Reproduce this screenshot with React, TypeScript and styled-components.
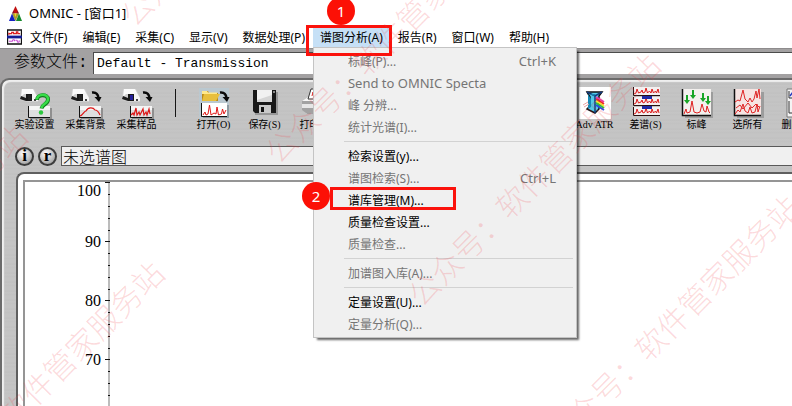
import React from "react";
import styled, { createGlobalStyle } from "styled-components";

const uiFont = '"Noto Sans", "Noto Sans CJK SC", sans-serif';
const monoFont = '"Liberation Mono", "Noto Sans CJK SC", monospace';

const GlobalStyle = createGlobalStyle`
  *, *::before, *::after { box-sizing: border-box; }
  body { margin: 0; background: #fff; font-family: ${uiFont}; font-size: 12px; color: #000; }
  button, input { font: inherit; color: inherit; margin: 0; }
`;

const Window = styled.div`
  position: relative;
  display: flex;
  flex-direction: column;
  height: 100vh;
  overflow: hidden;
  background: #a3a1a2;
`;

const TitleBar = styled.header`
  display: flex;
  align-items: center;
  gap: 6px;
  height: 26px;
  padding: 0 8px;
  background: #fff;
`;

const Title = styled.h1`
  margin: 0;
  font-size: 13px;
  font-weight: 400;
  line-height: 20px;
`;

const MenuBar = styled.nav`
  display: flex;
  align-items: center;
  gap: 1px;
  height: 22px;
  padding-left: 7px;
  background: #fff;
`;

const MenuEntry = styled.div`
  position: relative;
  height: 22px;
`;

const MenuButton = styled.button<{ $open?: boolean }>`
  display: block;
  height: 22px;
  padding: 2px 7px 0;
  border: 0;
  background: ${(p) => (p.$open ? "#c6e0f6" : "transparent")};
  line-height: 20px;
  white-space: nowrap;
`;

const Dropdown = styled.div`
  position: absolute;
  z-index: 2;
  top: 21px;
  left: 0;
  width: 264px;
  padding: 2px;
  border: 1px solid #c4c4c4;
  background: #f0f0f0;
  box-shadow: 3px 3px 2px -1px rgba(0, 0, 0, 0.6);
`;

const Item = styled.button`
  display: flex;
  align-items: center;
  justify-content: space-between;
  width: 100%;
  height: 22px;
  padding: 0 18px 0 32px;
  border: 0;
  background: transparent;
  white-space: nowrap;
  &:disabled { color: #757575; }
`;

const Wide = styled.span`
  font-size: 13px;
`;

const Separator = styled.hr`
  height: 1px;
  margin: 3px 1px 3px 28px;
  border: 0;
  background: #d2d2d2;
`;

const MenuMark = styled.div`
  position: absolute;
  z-index: 3;
  top: -1px;
  left: -7px;
  width: 86px;
  height: 31px;
  border: 3px solid #fb120c;
  pointer-events: none;
`;

const ItemMark = styled.div`
  position: absolute;
  z-index: 3;
  top: 139px;
  left: 16px;
  width: 126px;
  height: 23px;
  border: 3px solid #fb120c;
  pointer-events: none;
`;

const Badge = styled.span<{ $x: number; $y: number }>`
  position: absolute;
  z-index: 4;
  top: ${(p) => p.$y}px;
  left: ${(p) => p.$x}px;
  display: grid;
  place-items: center;
  width: 28px;
  height: 28px;
  border-radius: 50%;
  background: #fc1006;
  color: #fff;
  font-size: 15px;
`;

const ParamRow = styled.label`
  display: flex;
  align-items: center;
  gap: 4px;
  height: 30px;
  padding: 3px 0 4px 14px;
  border-top: 1px solid #8e8c8d;
  font-size: 16px;
`;

const ParamLabel = styled.span`
  display: flex;
  width: 75px;
  font-family: ${monoFont};
  font-weight: 300;
  line-height: 20px;
`;

const ParamInput = styled.input`
  flex: 1;
  min-width: 0;
  height: 22px;
  padding: 0 3px;
  border: 0;
  border-top: 1px solid #4c4c4c;
  border-left: 1px solid #4c4c4c;
  background: #fff;
  font-family: ${monoFont};
  font-size: 13px;
`;

const Panel = styled.main`
  flex: 1;
  min-height: 0;
  display: flex;
  flex-direction: column;
  overflow: hidden;
  border: 2px solid #6b6b6b;
  border-right: 0;
  border-bottom: 0;
  border-top-left-radius: 9px;
  box-shadow: inset 2px 2px 1px #efefef;
  background: repeating-linear-gradient(
    #c4c4c4 0, #c4c4c4 3px, #c0c0c0 4px, #c6c6c6 6px, #c1c1c1 7px, #c4c4c4 9px
  );
`;

const Toolbar = styled.div`
  display: flex;
  height: 66px;
  padding: 8px 0 0 7px;
`;

const Tool = styled.button`
  flex: 0 0 51px;
  display: flex;
  flex-direction: column;
  align-items: center;
  padding: 0;
  border: 0;
  background: transparent;
  font-family: "Liberation Serif", "Noto Sans CJK SC", serif;
  font-size: 10px;
  line-height: 12px;
  white-space: nowrap;
  svg { display: block; overflow: visible; }
`;

const Divider = styled.span`
  flex: 0 0 1px;
  height: 28px;
  margin: 1px 12px 0 13px;
  background: #161616;
`;

const Spacer = styled.span`
  flex: 0 0 228px;
`;

const StatusRow = styled.div`
  display: flex;
  align-items: center;
  gap: 4px;
  height: 20px;
  padding-left: 13px;
`;

const Round = styled.button`
  display: grid;
  place-items: center;
  flex: 0 0 19px;
  height: 19px;
  padding: 0;
  border: 2px solid #3c3c3c;
  border-radius: 50%;
  background: radial-gradient(circle at 40% 30%, #fff, #8c8c8c);
  font: bold 17px/14px "Liberation Serif", serif;
`;

const StatusInput = styled.input`
  flex: 1;
  min-width: 0;
  height: 20px;
  padding: 0 1px;
  border: 1px solid #595959;
  border-right: 0;
  background: #f0f0f0;
  font-family: ${monoFont};
  font-size: 16px;
  font-weight: 300;
`;

const Plot = styled.section`
  flex: 1;
  min-height: 0;
  margin: 6px 0 0 14px;
  padding: 6px 0 0 5px;
  border: 2px solid #5f5f5f;
  border-right: 0;
  border-bottom: 0;
  border-top-left-radius: 8px;
  background: #fff;
  overflow: hidden;
`;

const PlotInner = styled.div`
  height: 100%;
  border-top: 2px solid #959595;
  border-left: 2px solid #959595;
  overflow: hidden;
`;

const AxisLabel = styled.text`
  font-family: "Liberation Serif", serif;
  font-size: 16px;
  text-anchor: end;
`;

const Watermarks = styled.div`
  position: absolute;
  inset: 0;
  z-index: 5;
  overflow: hidden;
  pointer-events: none;
`;

const Watermark = styled.span<{ $x: number; $y: number }>`
  position: absolute;
  left: ${(p) => p.$x - 180}px;
  top: ${(p) => p.$y - 20}px;
  width: 360px;
  line-height: 40px;
  text-align: center;
  white-space: nowrap;
  font-family: "Noto Sans CJK SC", sans-serif;
  font-size: 31px;
  font-weight: 300;
  color: rgba(240, 60, 70, 0.19);
  transform: rotate(-45deg);
`;

const AppLogo = () => (
  <svg width="15" height="15" viewBox="0 0 15 15" aria-hidden="true">
    <path d="M7.5 0 11 7.5H4z" fill="#c01010" />
    <path d="M4 7.5H11L7.5 15z" fill="#f6e21c" />
    <path d="M4 7.5 7.3 15H1z" fill="#1521c4" />
    <path d="M11 7.5 14 15H8z" fill="#158a2c" />
    <path d="M4 7.500 5.500 4.500 7.500 11 9.500 4.500 11 7.500 7.500 15z" fill="#1b1b5a" opacity=".35" />
  </svg>
);

const DocIcon = () => (
  <svg width="15" height="16" viewBox="0 0 16 16" aria-hidden="true">
    <path d="M.5 .5h15v15H.5z" fill="#fff" stroke="#111" strokeWidth="1.500" />
    <path d="M0 6.500h16v3H0z" fill="#141c94" />
    <path d="M2 5.500V3.500M2 4.500h3V3h2v1.500h3V2.500h1.500v2H14" fill="none" stroke="#dd2020" strokeWidth="1.300" />
    <path d="M2 12.500h4V11h2v1.500M9 11.500h2v2h2v-2" fill="none" stroke="#c33bd0" />
  </svg>
);

const Spectrometer = ({ core = "#222" }: { core?: string }) => (
  <g>
    <path d="M3 1h13l4 8v5H9l-7-2z" fill="#cfcfcf" />
    <path d="M4 1h11l2 4-3 1H6L3 9z" fill="#fbfbfb" />
    <path d="M3 8l5 2v3l-6-2z" fill="#1c1c1c" />
    <path d="M8 6h6v7H8z" fill="#191919" />
    <path d="M10 7h3v5h-3z" fill={core} />
    <path d="M14 5h3l3 5v3h-6z" fill="#f5f5f5" />
    <path d="M16 11h2v2h-2z" fill="#444" />
  </g>
);

const Arrow = () => (
  <g fill="none" stroke="#0a0a0a">
    <path d="M23 4.500C27 4 29 6 29.500 10" strokeWidth="2.500" />
    <path d="M25.500 9h7L30 14z" fill="#0a0a0a" stroke="none" />
  </g>
);

const MiniPlot = ({ d }: { d?: string }) => (
  <g>
    <path d="M12 20h22v11H12z" fill="#8f8f8f" />
    <path d="M10 18h22v11H10z" fill="#dedede" />
    <path d="M10 18h22v4H10z" fill="#f5f5f5" />
    <path d="M10.500 18v11.500H32" fill="none" stroke="#111" />
    {d && <path d={d} fill="none" stroke="#dd1616" strokeWidth="1.200" />}
  </g>
);

const Svg = ({ children }: { children: React.ReactNode }) => (
  <svg width="34" height="31" viewBox="0 0 34 31" aria-hidden="true">{children}</svg>
);

const SetupIcon = () => (
  <Svg>
    <Spectrometer />
    <MiniPlot />
    <path d="M19 12c0-6 11-6.500 11-.5 0 5-6 4.500-6.500 9" fill="none" stroke="#0e7d1c" strokeWidth="4" />
    <path d="M19 11.500c0-6 11-6.500 11-.5 0 5-6 4.500-6.500 9" fill="none" stroke="#37dc49" strokeWidth="2.500" />
    <circle cx="23" cy="24.500" r="2.200" fill="#2bc63d" />
  </Svg>
);

const BackgroundIcon = () => (
  <Svg>
    <Spectrometer />
    <Arrow />
    <MiniPlot d="M11 28c3-1 4-5 6-5 2-4 7-4 9-1 3 0 4 3 5 5" />
  </Svg>
);

const SampleIcon = () => (
  <Svg>
    <Spectrometer core="#25209a" />
    <Arrow />
    <MiniPlot d="M11 27l2-2 1 2 2-7 1 7 2-3 1 3 3-6 1 6 2-3 1 3 2-6 1 5" />
  </Svg>
);

const OpenIcon = () => (
  <Svg>
    <path d="M2 0h30v30H2z" fill="#b4cbd9" opacity=".6" />
    <path d="M5 3h6l1 2h9v8H5z" fill="#b98a1a" />
    <path d="M5 3h5l1 1.500h9V6H5z" fill="#ffe98c" />
    <path d="M7 6h16l-4 7H5z" fill="#e8bf3d" />
    <Arrow />
    <path d="M6 17h26v13H6z" fill="#8d9aa2" />
    <path d="M4 15h26v13H4z" fill="#fff" />
    <path d="M4.500 15v13.500H30" fill="none" stroke="#111" />
    <path d="M6 27l2-3 1 3 2-1 1.500-9L14 27l3-2 2 1 1-7 1.500 8 3-1 1-5 1.500 5 2-4" fill="none" stroke="#e01818" />
  </Svg>
);

const SaveIcon = () => (
  <Svg>
    <path d="M7 4h23v23H7z" fill="#858585" opacity=".7" />
    <path d="M5 2h23v23H7l-2-2z" fill="#181818" />
    <path d="M9 2h15v12H9z" fill="#d5d5d5" />
    <path d="M9 2h15v5L9 12z" fill="#f1f1f1" />
    <path d="M11 17h12v8H11z" fill="#c9c9c9" />
    <path d="M13 19h3v5h-3z" fill="#111" />
    <path d="M25 3h2v2h-2z" fill="#888" />
  </Svg>
);

const PrintIcon = () => (
  <Svg>
    <path d="M5 15h27v11H8z" fill="#8a8a8a" opacity=".6" />
    <path d="M3 13l6-4h17l4 4v9l-3 3H7l-4-3z" fill="#a2a2a2" />
    <path d="M3 13l6-4h17l4 4z" fill="#f6f6f6" />
    <path d="M12 1h14l-3 10H9z" fill="#fff" stroke="#333" />
    <path d="M13 8l1-4 1 3" fill="none" stroke="#d22" />
    <path d="M3 16h27v4H3z" fill="#e6e6e6" />
  </Svg>
);

const AtrIcon = () => (
  <Svg>
    <path d="M1 -1h32v32H1z" fill="#fff" />
    <path d="M9 4h15l-3 4v13l-4 4-8-4 3-3V9z" fill="#54c9e8" stroke="#111" strokeWidth="1.500" />
    <path d="M9 4l8 4 7-4M17 8v17" fill="none" stroke="#123a7d" strokeWidth="1.500" />
    <path d="M10 6l3 5v8l-3 2zM12 6h6l-2 2z" fill="#1689b5" />
    <g fill="none" strokeWidth="2">
      <path d="M18 9l8 5" stroke="#e83bb0" />
      <path d="M18 11l8 5" stroke="#ef2525" />
      <path d="M18 13l8 5" stroke="#f6e52b" />
      <path d="M18 15l8 5" stroke="#2fc13c" />
      <path d="M18 17l8 5" stroke="#2b51e0" />
    </g>
    <path d="M5 17l5-3M6 19l5-3" stroke="#e9a3a3" />
  </Svg>
);

const SubtractIcon = () => (
  <Svg>
    {[-1, 9, 19].map((y) => (
      <g key={y} transform={`translate(4 ${y})`}>
        <path d="M0 0h27v9H0z" fill="#f4f0f0" />
        <path d="M.5 0v8.500H27" fill="none" stroke="#2a1010" />
        <path d="M1 7l2-1 1-4 1.500 4L8 5l1-2 1 3 2-1 1-4 1.500 5 2-2 1.500 2L19 2l1.500 4 2-2 1 2L25 2l1 4" fill="none" stroke="#dd1a1a" />
      </g>
    ))}
    <path d="M13 8h10v3H13zM13 18h10v3H13z" fill="#1e2aa5" />
  </Svg>
);

const PeaksIcon = () => (
  <Svg>
    <path d="M5 4h28v26H5z" fill="#8c8c8c" opacity=".7" />
    <path d="M2 1h29v26H2z" fill="#f3f0ee" />
    <path d="M2.500 1v26.500H31" fill="none" stroke="#111" strokeWidth="1.500" />
    <path d="M4 26l2-5 1 4 3-1 2-11 2 11 3 1 3-1 2-8 2 7 2 1 1-6 2 6 1 1" fill="none" stroke="#df2020" />
    <path
      d="M6 7h2v5h2l-3 4-3-4h2zM12 2h2v5h2l-3 4-3-4h2zM22 5h2v5h2l-3 4-3-4h2zM27 8h2v5h2l-3 4-3-4h2z"
      fill="#18a526"
    />
  </Svg>
);

const SelectAllIcon = () => (
  <Svg>
    <path d="M6 4h27v26H6z" fill="#8c8c8c" opacity=".7" />
    <path d="M3 1h27v26H3z" fill="#f6e4e2" />
    <path d="M3.500 1v26.500H30" fill="none" stroke="#111" strokeWidth="1.500" />
    <g fill="none" stroke="#df2626">
      <path d="M4 14l3-2 2 1 3-11 2 9 3 3 2-4 2 4 2-3 2-8 1 7 2-9 1 10" />
      <path d="M4 26l3-4 2 2 3-8 2 7 3 2 2-6 2 6 3-1 2-8 1 8 2-6" />
      <path d="M5 20l4-3 3 4 5-6 4 5 4-4 4 4" />
    </g>
  </Svg>
);

const DeleteIcon = () => (
  <Svg>
    <path d="M5 1h24v28H5z" fill="#f4f4f4" stroke="#777" />
    <path d="M7 3v7h18M7 13v12h18" fill="none" stroke="#333" />
    <path d="M8 8l3-4 2 4 4-3" fill="none" stroke="#2738c0" strokeWidth="1.500" />
    <path d="M10 5l8 4" stroke="#d22" />
  </Svg>
);

const labels = [100, 90, 80, 70];
const ticks = Array.from({ length: 24 }, (_, i) => i);

const Axis = () => (
  <svg width="100" height="300" viewBox="0 0 100 300" role="img" aria-label="%T">
    <path d="M84 0v300" stroke="#bcbcbc" strokeWidth="2" />
    {ticks.map((i) => {
      const major = i % 5 === 0;
      const y = Math.floor(i / 5) * 59 + (i % 5) * 12;
      return <rect key={i} x={major ? 80 : 83} y={y} width={major ? 5 : 2} height="1" fill="#111" />;
    })}
    {labels.map((n, i) => (
      <AxisLabel key={n} x="76" y={i === 0 ? 14 : i * 59 + 6}>{n}</AxisLabel>
    ))}
  </svg>
);

type Entry = { text: string; keys?: string; on?: boolean; wide?: boolean };

const groups: Entry[][] = [
  [
    { text: "标峰(P)...", keys: "Ctrl+K" },
    { text: "Send to OMNIC Specta", wide: true },
    { text: "峰 分辨..." },
    { text: "统计光谱(I)..." },
  ],
  [
    { text: "检索设置(y)...", on: true },
    { text: "谱图检索(S)...", keys: "Ctrl+L" },
    { text: "谱库管理(M)...", on: true },
    { text: "质量检查设置...", on: true },
    { text: "质量检查..." },
  ],
  [{ text: "加谱图入库(A)..." }],
  [{ text: "定量设置(U)...", on: true }, { text: "定量分析(Q)..." }],
];

const menus = ["文件(F)", "编辑(E)", "采集(C)", "显示(V)", "数据处理(P)", "谱图分析(A)", "报告(R)", "窗口(W)", "帮助(H)"];

const marks = [
  [390, 36],
  [533, 179],
  [672, 321],
  [37, 387],
  [246, -101],
  [-100, 250],
];

const AnalysisMenu = () => (
  <Dropdown role="menu">
    {groups.map((group, g) => (
      <React.Fragment key={g}>
        {g > 0 && <Separator />}
        {group.map((e) => (
          <Item key={e.text} role="menuitem" disabled={!e.on}>
            {e.wide ? <Wide>{e.text}</Wide> : <span>{e.text}</span>}
            {e.keys && <Wide>{e.keys}</Wide>}
          </Item>
        ))}
      </React.Fragment>
    ))}
    <ItemMark />
    <Badge $x={-12} $y={134}>2</Badge>
  </Dropdown>
);

export default function App() {
  return (
    <Window>
      <GlobalStyle />
      <TitleBar>
        <AppLogo />
        <Title>OMNIC - [窗口1]</Title>
      </TitleBar>
      <MenuBar>
        <DocIcon />
        {menus.map((m) => {
          const open = m === "谱图分析(A)";
          return (
            <MenuEntry key={m}>
              <MenuButton $open={open} aria-haspopup="menu" aria-expanded={open}>{m}</MenuButton>
              {open && (
                <>
                  <AnalysisMenu />
                  <MenuMark />
                  <Badge $x={14} $y={-29}>1</Badge>
                </>
              )}
            </MenuEntry>
          );
        })}
      </MenuBar>
      <ParamRow>
        <ParamLabel>参数文件:</ParamLabel>
        <ParamInput defaultValue="Default - Transmission" />
      </ParamRow>
      <Panel>
        <Toolbar role="toolbar">
          <Tool><SetupIcon />实验设置</Tool>
          <Tool><BackgroundIcon />采集背景</Tool>
          <Tool><SampleIcon />采集样品</Tool>
          <Divider />
          <Tool><OpenIcon />打开(O)</Tool>
          <Tool><SaveIcon />保存(S)</Tool>
          <Tool><PrintIcon />打印(P)</Tool>
          <Spacer />
          <Tool><AtrIcon />Adv ATR</Tool>
          <Tool><SubtractIcon />差谱(S)</Tool>
          <Tool><PeaksIcon />标峰</Tool>
          <Tool><SelectAllIcon />选所有</Tool>
          <Tool><DeleteIcon />删除(D)</Tool>
        </Toolbar>
        <StatusRow>
          <Round aria-label="信息">i</Round>
          <Round aria-label="记录">r</Round>
          <StatusInput aria-label="谱图" defaultValue="未选谱图" />
        </StatusRow>
        <Plot>
          <PlotInner>
            <Axis />
          </PlotInner>
        </Plot>
      </Panel>
      <Watermarks aria-hidden="true">
        {marks.map(([x, y]) => (
          <Watermark key={x} $x={x} $y={y}>公众号：软件管家服务站</Watermark>
        ))}
      </Watermarks>
    </Window>
  );
}
